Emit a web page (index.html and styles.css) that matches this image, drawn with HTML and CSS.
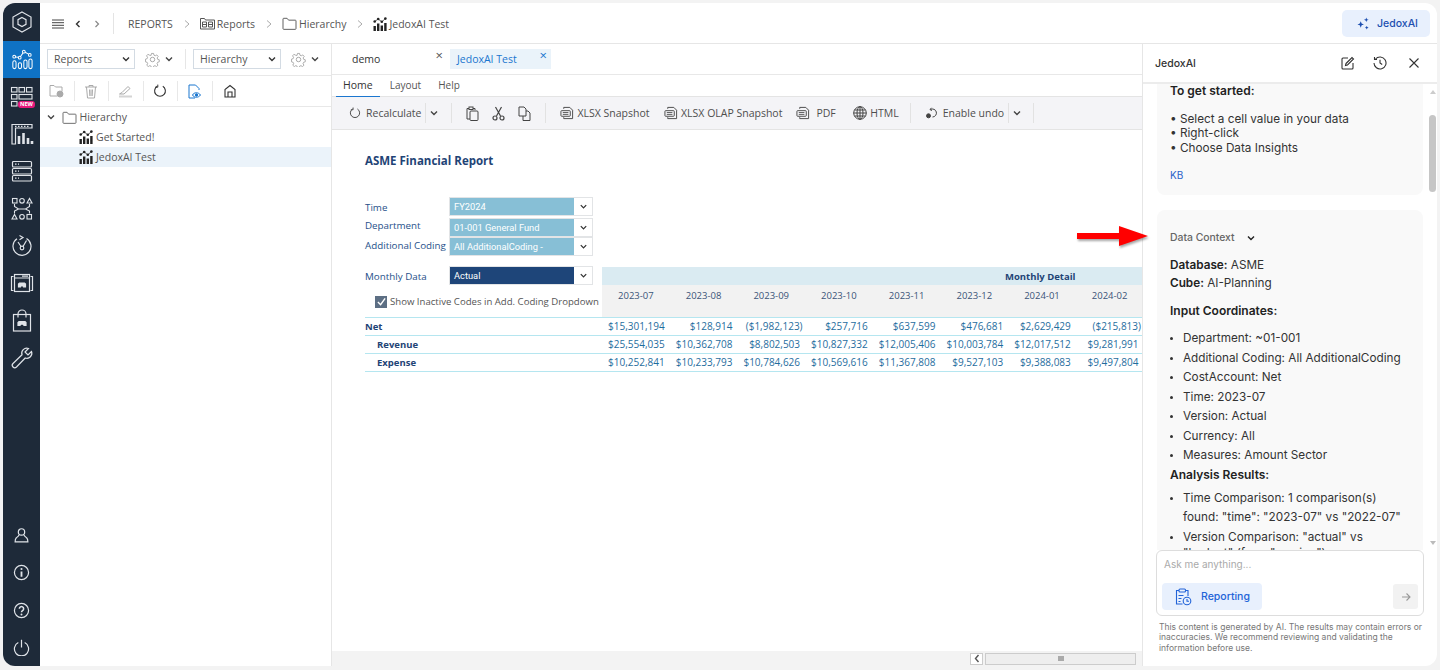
FILE: index.html
```html
<!DOCTYPE html>
<html lang="en">
<head>
    <meta charset="UTF-8">
    <title>Jedox Reports</title>
    <link rel="stylesheet" href="styles.css">
</head>
<body>
    <svg class="defs" width="0" height="0">
        <symbol id="i-report" viewBox="0 0 14 14">
            <g fill="currentColor"><rect x="0.5" y="9" width="2.4" height="5"/><rect x="4" y="6.5" width="2.4" height="7.5"/><rect x="7.6" y="8.5" width="2.4" height="5.5"/><rect x="11.2" y="6" width="2.4" height="8"/><circle cx="1.7" cy="4.5" r="1.3"/><circle cx="5.2" cy="2" r="1.3"/><circle cx="8.8" cy="4.8" r="1.3"/><circle cx="12.4" cy="1.6" r="1.3"/></g>
            <path d="M1.7 4.5 5.2 2l3.6 2.8 3.6-3.2" fill="none" stroke="currentColor" stroke-width=".7"/>
        </symbol>
        <symbol id="i-folder" viewBox="0 0 16 14">
            <path d="M1 12.5V2.2c0-.5.3-.8.8-.8h3.6l1.6 2h7.2c.5 0 .8.3.8.8v8.3c0 .5-.3.8-.8.8H1.8c-.5 0-.8-.3-.8-.8z" fill="none" stroke="currentColor" stroke-width="1"/>
        </symbol>
        <symbol id="i-chev" viewBox="0 0 10 10">
            <path d="M2 3.5 5 6.5l3-3" fill="none" stroke="currentColor" stroke-width="1.4"/>
        </symbol>
        <symbol id="i-gear" viewBox="0 0 16 16">
            <path d="M6.8 1h2.4l.4 2 1.5.7 1.8-1 1.6 1.8-1.2 1.6.5 1.6 1.9.6v2.3l-1.9.6-.6 1.5 1 1.8-1.7 1.6-1.7-1.1-1.5.6-.5 1.9H6.8l-.5-1.9-1.5-.6-1.7 1.1-1.7-1.6 1-1.8-.6-1.5-1.9-.6V7.6l1.9-.6.5-1.6L1.1 3.8l1.6-1.8 1.8 1L6.3 3.3z" transform="translate(.6 .6) scale(.93)" fill="none" stroke="currentColor" stroke-width=".9"/>
            <circle cx="8" cy="8" r="2.4" fill="none" stroke="currentColor" stroke-width=".9"/>
        </symbol>
        <symbol id="i-doc" viewBox="0 0 15 15">
            <path d="M4 3V1.500h6.500l3 3v9H4V12" fill="none" stroke="currentColor"/>
            <rect x="1" y="5" width="10" height="6" rx=".8" fill="none" stroke="currentColor"/>
            <path d="M3 7h6M3 9h6" stroke="currentColor" stroke-width=".9"/>
        </symbol>
        <symbol id="i-refresh" viewBox="0 0 14 14">
            <path d="M4.200 2.300a5.400 5.400 0 1 0 5.600 0" fill="none" stroke="currentColor" stroke-width="1.100"/>
            <path d="M4.800 .6v2.600H2.200" fill="none" stroke="currentColor" stroke-width="1"/>
        </symbol>
    </svg>

    <div class="app">
        <nav class="sidebar">
            <div class="side-item">
                <svg width="24" height="24" viewBox="0 0 24 24" fill="none" stroke="currentColor" stroke-width="1.200"><path d="M12 2 21 7v10l-9 5-9-5V7z"/><path d="M12 7.500 16 9.700v4.600l-4 2.200-4-2.200V9.700z"/></svg>
            </div>
            <div class="side-item active">
                <svg width="22" height="22" viewBox="0 0 24 24" fill="none" stroke="currentColor" stroke-width="1.100"><rect x="2" y="14" width="3.500" height="8.500" rx="1.700"/><rect x="8" y="16" width="3.500" height="6.500" rx="1.700"/><rect x="14" y="13" width="3.500" height="9.500" rx="1.700"/><rect x="19.500" y="12" width="3.500" height="10.500" rx="1.700"/><circle cx="3.500" cy="9.500" r="1.500"/><circle cx="9.500" cy="10.500" r="1.500"/><circle cx="14" cy="4" r="1.500"/><circle cx="20.500" cy="7.500" r="1.500"/><path d="M5 9.700l3 .5M10.400 9.200 13.200 5.300M15.400 4.700l3.800 2"/></svg>
            </div>
            <div class="side-item">
                <svg width="24" height="24" viewBox="0 0 24 24" fill="none" stroke="currentColor" stroke-width="1.100"><rect x="1.500" y="2.500" width="5.500" height="4.500"/><rect x="9" y="2.500" width="5.500" height="4.500"/><rect x="16.500" y="2.500" width="5.500" height="4.500"/><rect x="1.500" y="9.500" width="5.500" height="4.500"/><rect x="9" y="9.500" width="13" height="4.500"/><rect x="1.500" y="16.500" width="5.500" height="4.500"/></svg>
                <span class="new-badge">NEW</span>
            </div>
            <div class="side-item">
                <svg width="24" height="24" viewBox="0 0 24 24" fill="none" stroke="currentColor" stroke-width="1.200"><path d="M2 22V2.500h20V6H5.500v16z"/><path d="M5 4.300h15" stroke-dasharray="1.500 1.500"/><path d="M9 22v-8M13.500 22V11M18 22v-6M22 22v-3" stroke-width="2.600"/></svg>
            </div>
            <div class="side-item">
                <svg width="24" height="24" viewBox="0 0 24 24" fill="none" stroke="currentColor" stroke-width="1.200"><rect x="2.500" y="2.500" width="19" height="5.500" rx="1"/><rect x="2.500" y="9.500" width="19" height="5.500" rx="1"/><rect x="2.500" y="16.500" width="19" height="5.500" rx="1"/><path d="M5 5.200h1.500M8 5.200h1M5 12.200h1.500M8 12.200h1M5 19.200h1.500M8 19.200h1"/></svg>
            </div>
            <div class="side-item">
                <svg width="24" height="24" viewBox="0 0 24 24" fill="none" stroke="currentColor" stroke-width="1.100"><rect x="2.500" y="1.500" width="4.500" height="4.500"/><circle cx="12" cy="3.800" r="2.300"/><path d="M17 6l2.500-4.500L22 6z"/><path d="M2 22l2.500-4.500L7 22z"/><circle cx="12" cy="19.800" r="2.300"/><rect x="17" y="17.500" width="4.500" height="4.500"/><path d="M4.500 7v2.500l4 2.500h7l4-2.500V7M4.500 16.500V14l4-2M19.500 16.500V14l-4-2"/></svg>
            </div>
            <div class="side-item">
                <svg width="24" height="24" viewBox="0 0 24 24" fill="none" stroke="currentColor" stroke-width="1.200"><path d="M7 4.800A9 9 0 1 0 16.500 4.500"/><circle cx="12" cy="14" r="1.800"/><path d="M13 12.500 16.500 6.500M11 12.500 8 8M9.500 1.500 13 3.500 9.500 5.800"/></svg>
            </div>
            <div class="side-item">
                <svg width="24" height="24" viewBox="0 0 24 24" fill="none" stroke="currentColor" stroke-width="1.200"><path d="M3.500 5.500H1.500v14h2M20.500 5.500h2v14h-2"/><rect x="4.500" y="3.500" width="15" height="17"/><path d="M4.500 7h15M12 5.200h6" /><path d="M8.500 16v-3l1-1h5l1 1v3h-2l-.7-1.300h-1.600L10.500 16z" fill="currentColor"/></svg>
            </div>
            <div class="side-item">
                <svg width="24" height="24" viewBox="0 0 24 24" fill="none" stroke="currentColor" stroke-width="1.200"><rect x="3.500" y="5.500" width="17" height="16.500"/><path d="M8 8.500V5a4 4 0 0 1 8 0v3.500"/><path d="M8 16.500v-3l1-1h6l1 1v3h-2l-.7-1.300h-2.600L10 16.500z" fill="currentColor"/></svg>
            </div>
            <div class="side-item">
                <svg width="24" height="24" viewBox="0 0 24 24" fill="none" stroke="currentColor" stroke-width="1.200"><path d="M21.500 5.500 18 9l-3-3 3.500-3.500a5 5 0 0 0-6.500 6.300L3 17.500a2.500 2.500 0 0 0 0 3.500 2.500 2.500 0 0 0 3.500 0l8.700-9a5 5 0 0 0 6.300-6.500z"/></svg>
            </div>
            <div class="side-spacer"></div>
            <div class="side-item">
                <svg width="17" height="17" viewBox="0 0 24 24" fill="none" stroke="currentColor" stroke-width="1.700"><circle cx="12" cy="7" r="4.500"/><path d="M8.500 11C8 13 6 14 4.500 15.500 3 17 3 19 3 21h18c0-2 0-4-1.500-5.500C18 14 16 13 15.500 11"/></svg>
            </div>
            <div class="side-item">
                <svg width="17" height="17" viewBox="0 0 24 24" fill="none" stroke="currentColor" stroke-width="1.700"><circle cx="12" cy="12" r="10"/><path d="M12 10.500V18" stroke-width="2.600"/><circle cx="12" cy="7" r="1.500" fill="currentColor" stroke="none"/></svg>
            </div>
            <div class="side-item">
                <svg width="17" height="17" viewBox="0 0 24 24" fill="none" stroke="currentColor" stroke-width="1.700"><circle cx="12" cy="12" r="10"/><path d="M9 9.500a3 3 0 1 1 4.500 2.600c-1 .6-1.500 1.200-1.500 2.400" stroke-width="2.200"/><circle cx="12" cy="17.500" r="1.400" fill="currentColor" stroke="none"/></svg>
            </div>
            <div class="side-item">
                <svg width="17" height="17" viewBox="0 0 24 24" fill="none" stroke="currentColor" stroke-width="1.700"><path d="M7.500 5a10 10 0 1 0 9 0"/><path d="M12 1v11"/></svg>
            </div>
        </nav>

        <div class="content">
            <header class="topbar">
                <svg class="ico hamburger" width="14" height="10" viewBox="0 0 14 10" stroke="currentColor"><path d="M1 1h12M1 3.700h12M1 6.300h12M1 9h12"/></svg>
                <svg class="ico nav-back" width="8" height="10" viewBox="0 0 8 10" fill="none" stroke="#333" stroke-width="1.400"><path d="M5.500 2 2.500 5l3 3"/></svg>
                <svg class="ico nav-fwd" width="8" height="10" viewBox="0 0 8 10" fill="none" stroke="#888" stroke-width="1.200"><path d="M2.500 2l3 3-3 3"/></svg>
                <span class="top-divider"></span>
                <span class="crumb">REPORTS</span>
                <svg class="crumb-sep" width="8" height="10" viewBox="0 0 8 10" fill="none" stroke="#aaa"><path d="M2 1.500 6 5 2 8.500"/></svg>
                <svg class="crumb-ico" width="15" height="13" viewBox="0 0 15 13" fill="none" stroke="#555"><path d="M.5 12V1.500h4l1 1.500h9v9z"/><path d="M2.500 5h4v5h-4zM8.500 5h4v5h-4zM2.500 7.500h4M8.500 7.500h4"/></svg>
                <span class="crumb">Reports</span>
                <svg class="crumb-sep" width="8" height="10" viewBox="0 0 8 10" fill="none" stroke="#aaa"><path d="M2 1.500 6 5 2 8.500"/></svg>
                <svg class="crumb-ico" width="15" height="13"><use href="#i-folder"/></svg>
                <span class="crumb">Hierarchy</span>
                <svg class="crumb-sep" width="8" height="10" viewBox="0 0 8 10" fill="none" stroke="#aaa"><path d="M2 1.500 6 5 2 8.500"/></svg>
                <svg class="crumb-ico dark" width="14" height="14"><use href="#i-report"/></svg>
                <span class="crumb">JedoxAI Test</span>
                <button class="ai-button">
                    <svg width="13" height="13" viewBox="0 0 14 14" fill="currentColor"><path d="M4 4.500 5 7l2.500 1L5 9 4 11.500 3 9 .5 8 3 7zM10 .5l.7 1.800 1.800.7-1.800.7L10 5.500l-.7-1.800L7.500 3l1.800-.7zM10.500 9.500l.6 1.400 1.400.6-1.400.6-.6 1.400-.6-1.400-1.400-.6 1.400-.6z"/></svg>
                    JedoxAI
                </button>
            </header>

            <div class="workspace">
                <aside class="tree-panel">
                    <div class="pickers">
                        <div class="picker">Reports<svg width="10" height="10"><use href="#i-chev"/></svg></div>
                        <div class="gear"><svg class="gear-ico" width="15" height="15"><use href="#i-gear"/></svg><svg width="10" height="10"><use href="#i-chev"/></svg></div>
                        <span class="picker-divider"></span>
                        <div class="picker">Hierarchy<svg width="10" height="10"><use href="#i-chev"/></svg></div>
                        <div class="gear"><svg class="gear-ico" width="15" height="15"><use href="#i-gear"/></svg><svg width="10" height="10"><use href="#i-chev"/></svg></div>
                    </div>
                    <div class="tree-tools">
                        <span class="tree-tool muted"><svg width="15" height="14" viewBox="0 0 15 14" fill="none" stroke="currentColor"><path d="M8 12H1V1.500h4l1.500 1.500H13v4"/><circle cx="11" cy="10" r="3" fill="currentColor"/></svg></span>
                        <span class="tree-tool muted"><svg width="14" height="15" viewBox="0 0 14 15" fill="none" stroke="currentColor"><path d="M1 3h12M5 3V1.500h4V3M2.500 3l1 11h7l1-11M5.500 5.500l.3 6.500M8.500 5.500l-.3 6.500M7 5.500V12"/></svg></span>
                        <span class="tree-tool muted"><svg width="15" height="14" viewBox="0 0 15 14" fill="none" stroke="currentColor"><path d="M4 8.500 10 2.500l2 2-6 5.500H1.500L4 8.500"/><path d="M1 12.500h13" stroke-width="2" opacity=".5"/></svg></span>
                        <span class="tree-tool"><svg width="14" height="14"><use href="#i-refresh"/></svg></span>
                        <span class="tree-tool blue"><svg width="15" height="15" viewBox="0 0 15 15" fill="none" stroke="currentColor"><path d="M8 14H2V1h6.500L12 4.500V6"/><path d="M5.500 11c1.500-3 6-3 8 0-2 3-6.500 3-8 0z"/><circle cx="9.500" cy="11" r="1.200" fill="currentColor"/></svg></span>
                        <span class="tree-tool"><svg width="14" height="14" viewBox="0 0 14 14" fill="none" stroke="currentColor" stroke-width="1.100"><path d="M2 13V5.500L7 1.500l5 4V13z"/><path d="M5 13V8h4v5"/></svg></span>
                    </div>
                    <ul class="tree">
                        <li class="tree-row">
                            <svg class="tree-chev" width="10" height="10"><use href="#i-chev"/></svg>
                            <svg class="tree-folder" width="15" height="13"><use href="#i-folder"/></svg>
                            Hierarchy
                        </li>
                        <li class="tree-row leaf"><svg class="tree-report" width="14" height="14"><use href="#i-report"/></svg>Get Started!</li>
                        <li class="tree-row leaf selected"><svg class="tree-report" width="14" height="14"><use href="#i-report"/></svg>JedoxAI Test</li>
                    </ul>
                </aside>

                <main class="report">
                    <div class="doc-tabs">
                        <div class="doc-tab">demo<span class="tab-close">&times;</span></div>
                        <div class="doc-tab current">JedoxAI Test<span class="tab-close">&times;</span></div>
                    </div>
                    <div class="ribbon-tabs">
                        <span class="ribbon-tab on">Home</span>
                        <span class="ribbon-tab">Layout</span>
                        <span class="ribbon-tab">Help</span>
                    </div>
                    <div class="toolbar">
                        <span class="tool recalc"><svg width="12" height="12"><use href="#i-refresh"/></svg>Recalculate</span>
                        <span class="tool-split"></span>
                        <svg class="tool-chev" width="10" height="10"><use href="#i-chev"/></svg>
                        <span class="tool-split sep-a"></span>
                        <svg class="tool-ico first" width="13" height="15" viewBox="0 0 13 15" fill="none" stroke="currentColor"><path d="M3 2.500H1V13h3M9 4V2.500H7"/><rect x="3" y="1" width="4" height="2.500"/><rect x="4" y="5" width="8" height="9.500" rx="1"/></svg>
                        <svg class="tool-ico" width="13" height="15" viewBox="0 0 13 15" fill="none" stroke="currentColor" stroke-width="1.200"><path d="M3.500 1 8.500 10M9.500 1 4.500 10"/><circle cx="3" cy="12" r="2" /><circle cx="10" cy="12" r="2"/></svg>
                        <svg class="tool-ico" width="13" height="15" viewBox="0 0 13 15" fill="none" stroke="currentColor"><path d="M1 1h5l2 2v7H1z"/><path d="M8 5h2l2 2v7.500H5V10"/></svg>
                        <span class="tool-split sep-b"></span>
                        <span class="tool snap"><svg width="14" height="14"><use href="#i-doc"/></svg>XLSX Snapshot</span>
                        <span class="tool snap"><svg width="14" height="14"><use href="#i-doc"/></svg>XLSX OLAP Snapshot</span>
                        <span class="tool snap pdf"><svg width="14" height="14"><use href="#i-doc"/></svg>PDF</span>
                        <span class="tool snap html"><svg width="14" height="14" viewBox="0 0 14 14" fill="none" stroke="currentColor"><circle cx="7" cy="7" r="6.300"/><ellipse cx="7" cy="7" rx="3" ry="6.300"/><path d="M7 .7v12.600M.7 7h12.600M1.500 4h11M1.500 10h11"/></svg>HTML</span>
                        <span class="tool-split sep-c"></span>
                        <span class="tool undo"><svg width="12" height="12" viewBox="0 0 12 12" fill="none" stroke="currentColor"><path d="M4.500 2.500a4 4 0 1 1 2 7.500"/><path d="M5.500 .8 4 2.500l1.800 1.200"/><circle cx="2.500" cy="8.800" r="2" fill="currentColor"/></svg>Enable undo</span>
                        <span class="tool-split"></span>
                        <svg class="tool-chev" width="10" height="10"><use href="#i-chev"/></svg>
                        <span class="tool-split sep-d"></span>
                    </div>

                    <div class="sheet">
                        <h1 class="sheet-title">ASME Financial Report</h1>
                        <div class="sheet-grid">
                            <label class="f-label">Time</label>
                            <div class="f-select light"><span>FY2024</span><i><svg width="9" height="9"><use href="#i-chev"/></svg></i></div>
                            <label class="f-label up">Department</label>
                            <div class="f-select light mid"><span>01-001 General Fund</span><i><svg width="9" height="9"><use href="#i-chev"/></svg></i></div>
                            <label class="f-label up">Additional Coding</label>
                            <div class="f-select light"><span>All AdditionalCoding -</span><i><svg width="9" height="9"><use href="#i-chev"/></svg></i></div>

                            <label class="f-label monthly">Monthly Data</label>
                            <div class="f-select dark monthly-select"><span>Actual</span><i><svg width="9" height="9"><use href="#i-chev"/></svg></i></div>
                            <div class="band">Monthly Detail</div>

                            <label class="inactive"><span class="checkbox"><svg width="9" height="9" viewBox="0 0 10 10" fill="none" stroke="#fff" stroke-width="1.600"><path d="M1 5.500 4 8.500 9 1.500"/></svg></span>Show Inactive Codes in Add. Coding Dropdown</label>
                            <div class="dates">
                                <span>2023-07</span><span>2023-08</span><span>2023-09</span><span>2023-10</span><span>2023-11</span><span>2023-12</span><span>2024-01</span><span>2024-02</span>
                            </div>
                        </div>
                        <div class="sheet-rows">
                            <div class="row-label">Net</div>
                            <div class="val">$15,301,194</div><div class="val">$128,914</div><div class="val neg">($1,982,123)</div><div class="val">$257,716</div><div class="val">$637,599</div><div class="val">$476,681</div><div class="val">$2,629,429</div><div class="val neg">($215,813)</div>

                            <div class="row-label sub">Revenue</div>
                            <div class="val">$25,554,035</div><div class="val">$10,362,708</div><div class="val">$8,802,503</div><div class="val">$10,827,332</div><div class="val">$12,005,406</div><div class="val">$10,003,784</div><div class="val">$12,017,512</div><div class="val">$9,281,991</div>

                            <div class="row-label sub">Expense</div>
                            <div class="val">$10,252,841</div><div class="val">$10,233,793</div><div class="val">$10,784,626</div><div class="val">$10,569,616</div><div class="val">$11,367,808</div><div class="val">$9,527,103</div><div class="val">$9,388,083</div><div class="val">$9,497,804</div>
                        </div>
                    </div>

                    <div class="hscroll">
                        <span class="hscroll-btn"><svg width="8" height="9" viewBox="0 0 8 9" fill="none" stroke="#555" stroke-width="1.400"><path d="M5.500 1 2.500 4.500l3 3.500"/></svg></span>
                        <span class="hscroll-thumb"><i></i></span>
                    </div>
                </main>

                <aside class="ai-panel">
                    <div class="ai-head">
                        <span class="ai-title">JedoxAI</span>
                        <svg class="ai-edit" width="14" height="14" viewBox="0 0 14 14" fill="none" stroke="currentColor" stroke-width="1.100"><path d="M7 2H2a1 1 0 0 0-1 1v9a1 1 0 0 0 1 1h9a1 1 0 0 0 1-1V7"/><path d="M5 7.500 11 1.500l1.500 1.500-6 6L4.500 9.500z"/></svg>
                        <svg class="ai-hist" width="14" height="14" viewBox="0 0 14 14" fill="none" stroke="currentColor" stroke-width="1.100"><path d="M2.500 3A6 6 0 1 1 1 7"/><path d="M1.500 1v2.500H4M7 3.800V7l2.200 1.500"/></svg>
                        <svg class="ai-close" width="12" height="12" viewBox="0 0 12 12" fill="none" stroke="currentColor" stroke-width="1.100"><path d="M1.500 1.500l9 9M10.500 1.500l-9 9"/></svg>
                    </div>
                    <div class="ai-scroll">
                        <div class="ai-content">
                            <section class="ai-card first">
                                <p class="strong">To get started:</p>
                                <p class="tips">&bull; Select a cell value in your data<br>&bull; Right-click<br>&bull; Choose Data Insights</p>
                                <a class="kb">KB</a>
                            </section>
                            <section class="ai-card second">
                                <div class="context">Data Context<svg width="10" height="10"><use href="#i-chev"/></svg></div>
                                <p class="meta"><b>Database:</b> ASME<br><b>Cube:</b> AI-Planning</p>
                                <p class="strong sect">Input Coordinates:</p>
                                <ul class="facts">
                                    <li>Department: ~01-001</li>
                                    <li>Additional Coding: All AdditionalCoding</li>
                                    <li>CostAccount: Net</li>
                                    <li>Time: 2023-07</li>
                                    <li>Version: Actual</li>
                                    <li>Currency: All</li>
                                    <li>Measures: Amount Sector</li>
                                </ul>
                                <p class="strong results">Analysis Results:</p>
                                <ul class="facts result-list">
                                    <li>Time Comparison: 1 comparison(s) found: "time": "2023-07" vs "2022-07"</li>
                                    <li>Version Comparison: "actual" vs "budget" (from "version")</li>
                                </ul>
                            </section>
                        </div>
                        <div class="ai-track">
                            <span class="arrow-up"></span>
                            <span class="ai-thumb"></span>
                            <span class="arrow-down"></span>
                        </div>
                    </div>
                    <div class="composer">
                        <div class="placeholder">Ask me anything...</div>
                        <div class="composer-row">
                            <span class="chip">
                                <svg width="18" height="18" viewBox="0 0 18 18" fill="none" stroke="currentColor" stroke-width="1.100"><path d="M5 2.500H2.500v13.500h6M11.500 2.500H14V8"/><rect x="5" y="1" width="6.500" height="3" rx="1"/><path d="M4.500 7.500h5M4.500 10.500h3M4.500 13.500h2"/><circle cx="13" cy="13" r="3.800"/><path d="M13 11v2.200h2"/></svg>
                                Reporting
                            </span>
                            <span class="send"><svg width="10" height="10" viewBox="0 0 10 10" fill="none" stroke="currentColor" stroke-width="1.100"><path d="M1 5h8M5.500 1.500 9 5 5.500 8.500"/></svg></span>
                        </div>
                    </div>
                    <p class="disclaimer">This content is generated by AI. The results may contain errors or inaccuracies. We recommend reviewing and validating the information before use.</p>
                </aside>
            </div>
        </div>

        <svg class="pointer" width="76" height="24" viewBox="0 0 76 24"><path d="M2 8h42V1l29 10-29 10v-7H2z" fill="#f00"/></svg>
    </div>
</body>
</html>
```

FILE: styles.css
```css
/* Basic reset */
* {
    box-sizing: border-box;
    margin: 0;
    padding: 0;
}

body {
    width: 1440px;
    height: 670px;
    padding: 3px;
    overflow: hidden;
    background-color: #f3f3f3;
    font-family: 'Open Sans', sans-serif;
    font-size: 10.5px;
    color: #555;
}

.defs {
    position: absolute;
}

.app {
    position: relative;
    display: flex;
    width: 1434px;
    height: 663px;
    background-color: #fff;
    border-radius: 12px;
    overflow: hidden;
}

svg {
    flex: none;
    display: block;
}

/* Sidebar */
.sidebar {
    display: flex;
    flex-direction: column;
    flex: none;
    width: 37px;
    background-color: #1e2a39;
    color: #dfe3e8;
}

.side-item {
    position: relative;
    display: flex;
    flex: none;
    align-items: center;
    justify-content: center;
    height: 37.3px;
}

.side-item.active {
    margin-top: 0.5px;
    background-color: #0f72c4;
    color: #fff;
}

.side-spacer {
    flex: 1;
}

.new-badge {
    position: absolute;
    left: 15px;
    top: 23px;
    padding: 0 2px;
    border-radius: 3px;
    background-color: #e6197c;
    color: #fff;
    font-size: 5.5px;
    font-weight: 700;
    line-height: 7px;
}

/* Top bar */
.content {
    display: flex;
    flex: 1;
    flex-direction: column;
    min-width: 0;
}

.topbar {
    display: flex;
    flex: none;
    align-items: center;
    height: 41px;
    padding-top: 1px;
    border-bottom: 1px solid #e6e6e6;
    font-size: 10.5px;
}

.hamburger {
    margin-left: 11px;
    color: #444;
}

.nav-back {
    margin-left: 9px;
}

.nav-fwd {
    margin-left: 11px;
}

.top-divider {
    width: 1px;
    height: 21px;
    margin: 0 14px 0 12px;
    background-color: #e4e4e4;
}

.crumb {
    color: #555;
    white-space: nowrap;
}

.crumb-sep {
    margin: 0 9px 0 10px;
}

.crumb-ico {
    margin-right: 2px;
    color: #555;
}

.crumb-ico.dark {
    color: #222;
}

.ai-button {
    display: flex;
    align-items: center;
    gap: 7px;
    height: 27px;
    margin-left: auto;
    margin-right: 7px;
    padding: 0 12px 0 15px;
    border: none;
    border-radius: 5px;
    background-color: #e8f0fd;
    color: #1d4fb0;
    font-family: 'Inter', sans-serif;
    font-size: 10.5px;
    font-weight: 500;
}

.workspace {
    display: flex;
    flex: 1;
    min-height: 0;
}

/* Tree panel */
.tree-panel {
    flex: none;
    width: 292px;
    border-right: 1px solid #e6e6e6;
}

.pickers {
    display: flex;
    align-items: center;
    height: 32px;
    padding: 0 0 1px 7px;
    border-bottom: 1px solid #e8e8e8;
}

.picker {
    display: flex;
    align-items: center;
    justify-content: space-between;
    width: 89px;
    height: 20px;
    padding: 0 3px 0 6px;
    border: 1px solid #d3dbe3;
    color: #555;
}

.picker svg {
    color: #333;
}

.gear {
    display: flex;
    align-items: center;
    gap: 4px;
    width: 50px;
    padding-left: 10px;
}

.gear svg {
    color: #444;
}

.gear .gear-ico {
    color: #999;
}

.picker-divider {
    width: 1px;
    height: 20px;
    margin-right: 7px;
    background-color: #e6e6e6;
}

.tree-tools {
    display: flex;
    align-items: center;
    height: 31px;
    border-bottom: 1px solid #e8e8e8;
}

.tree-tool {
    display: flex;
    align-items: center;
    justify-content: center;
    width: 34.5px;
    height: 20px;
    border-right: 1px solid #e8e8e8;
    color: #333;
}

.tree-tool:last-child {
    border-right: none;
}

.tree-tool.muted {
    color: #aaa;
}

.tree-tool.blue {
    color: #1a76cf;
}

.tree {
    list-style: none;
}

.tree-row {
    display: flex;
    align-items: center;
    height: 20px;
    color: #555;
    white-space: nowrap;
}

.tree-chev {
    margin-left: 6px;
    color: #444;
}

.tree-folder {
    margin: 0 2.5px 0 6px;
    color: #666;
}

.tree-row.leaf {
    padding-left: 39px;
}

.tree-report {
    margin-right: 3px;
    color: #222;
}

.tree-row.selected {
    background-color: #ebf3fa;
}

/* Report */
.report {
    display: flex;
    flex: none;
    flex-direction: column;
    width: 810px;
    min-height: 0;
}

.doc-tabs {
    display: flex;
    flex: none;
    height: 31px;
    padding-top: 5px;
    border-bottom: 1px solid #e8e8e8;
}

.doc-tab {
    position: relative;
    width: 98px;
    height: 20px;
    margin-left: 20px;
    color: #333;
    font-size: 10.5px;
    line-height: 20px;
}

.doc-tab.current {
    width: 101px;
    margin-left: 0;
    padding-left: 7px;
    background-color: #eaf3fa;
    color: #1a76cf;
}

.tab-close {
    position: absolute;
    right: 7px;
    top: -4px;
    font-size: 13px;
    color: #555;
}

.doc-tab.current .tab-close {
    right: 4px;
    color: #1a76cf;
}

.ribbon-tabs {
    display: flex;
    flex: none;
    height: 22px;
    border-bottom: 1px solid #e4e4e4;
    padding-left: 4px;
}

.ribbon-tab {
    padding: 0 7px;
    margin-right: 3px;
    font-size: 10px;
    line-height: 20px;
    color: #555;
}

.ribbon-tab.on {
    height: 22px;
    border-bottom: 1.5px solid #1a76cf;
    color: #333;
    font-size: 10.5px;
    font-weight: 500;
}

.toolbar {
    display: flex;
    flex: none;
    align-items: center;
    height: 33px;
    padding-left: 17px;
    border-bottom: 1px solid #e4e4e4;
    background-color: #f4f4f7;
    color: #444;
}

.tool {
    display: flex;
    align-items: center;
    gap: 5px;
    white-space: nowrap;
    color: #4e4e4e;
}

.tool svg {
    color: #444;
}

.tool-split {
    width: 1px;
    height: 20px;
    margin: 0 3.5px;
    background-color: #e2e2e2;
}

.tool-chev {
    color: #444;
}

.sep-a {
    margin-left: 12px;
}

.tool-ico {
    margin-left: 13px;
}

.tool-ico.first {
    margin-left: 10px;
}

.sep-b {
    margin-left: 14px;
    margin-right: 14px;
}

.snap {
    margin-right: 14px;
    gap: 3.5px;
}

.pdf {
    gap: 6px;
    margin-right: 17px;
}

.html {
    margin-right: 11px;
}

.sep-c {
    margin-left: 0;
    margin-right: 15px;
}

.sep-d {
    margin-left: 11px;
}

/* Sheet */
.sheet {
    flex: 1;
    min-height: 0;
    overflow: hidden;
    padding: 23px 0 0 33px;
}

.sheet-title {
    height: 44px;
    color: #1f4476;
    font-size: 11.5px;
    font-weight: 700;
    line-height: 16px;
}

.sheet-grid {
    display: grid;
    grid-template-columns: 84px 144px 9px repeat(8, 67.7px);
    grid-template-rows: 20px 20px 19px 10px 19px 32px;
}

.sheet-rows {
    display: grid;
    grid-template-columns: 237px repeat(8, 67.7px);
    grid-auto-rows: 18px;
    border-top: 1px solid #b5e6f0;
}

.f-label {
    grid-column: 1;
    align-self: center;
    color: #26508a;
    font-size: 9.8px;
    white-space: nowrap;
}

.f-label.up {
    margin-top: -3px;
}

.f-select {
    grid-column: 2;
    display: flex;
    align-self: stretch;
    height: 19px;
    border: 1px solid #e2e4e6;
    color: #fff;
    font-family: 'Roboto', sans-serif;
    font-size: 9.3px;
    line-height: 17px;
}

.f-select.mid {
    margin-top: 1px;
}

.f-select span {
    flex: 1;
    padding-left: 4px;
}

.f-select i {
    display: flex;
    align-items: center;
    justify-content: center;
    width: 18px;
    background-color: #fff;
    color: #333;
}

.f-select.light span {
    background-color: #87bfd6;
}

.f-select.dark span {
    background-color: #1e4579;
}

.f-label.monthly {
    grid-row: 5;
    margin-top: 2px;
}

.monthly-select {
    grid-row: 5;
}

.band {
    grid-column: 4 / span 8;
    grid-row: 5;
    margin-top: 1px;
    padding-right: 68px;
    background-color: #daebf2;
    color: #1f4476;
    font-size: 9.5px;
    font-weight: 700;
    line-height: 19px;
    text-align: right;
}

.inactive {
    display: flex;
    grid-column: 1 / span 3;
    grid-row: 6;
    align-items: center;
    align-self: start;
    gap: 3px;
    height: 17px;
    margin: 8px 0 0 10px;
    color: #555;
    font-size: 9.6px;
    white-space: nowrap;
}

.checkbox {
    display: flex;
    flex: none;
    align-items: center;
    justify-content: center;
    width: 12px;
    height: 12px;
    background-color: #5d6f84;
}

.dates {
    display: grid;
    grid-column: 4 / span 8;
    grid-row: 6;
    grid-template-columns: repeat(8, 67.7px);
    padding-top: 4px;
    background-color: #f2f2f2;
    color: #3b5478;
    font-size: 9.5px;
    text-align: center;
}

.row-label {
    border-bottom: 1px solid #b5e6f0;
    color: #1f4476;
    font-size: 9.5px;
    font-weight: 700;
    line-height: 17px;
}

.row-label.sub {
    padding-left: 12px;
}

.val {
    padding-right: 5px;
    border-bottom: 1px solid #b5e6f0;
    color: #1f6d9e;
    font-size: 10px;
    line-height: 17px;
    text-align: right;
    white-space: nowrap;
}

.val.neg {
    padding-right: 2.5px;
}

.hscroll {
    display: flex;
    flex: none;
    align-items: center;
    justify-content: flex-end;
    gap: 2px;
    height: 15px;
    padding-right: 6px;
    background-color: #f3f3f3;
}

.hscroll-btn {
    display: flex;
    align-items: center;
    justify-content: center;
    width: 13px;
    height: 12px;
    border: 1px solid #ccc;
    background-color: #fff;
}

.hscroll-thumb {
    display: flex;
    align-items: center;
    justify-content: center;
    width: 151px;
    height: 12px;
    border: 1px solid #ccc;
    background-color: #eee;
}

.hscroll-thumb i {
    width: 6px;
    height: 5px;
    background-color: #aaa;
}

/* AI panel */
.ai-panel {
    display: flex;
    flex: 1;
    flex-direction: column;
    min-width: 0;
    border-left: 1px solid #e6e6e6;
    font-family: 'Inter', sans-serif;
}

.ai-head {
    display: flex;
    flex: none;
    align-items: center;
    height: 40px;
    padding-left: 12px;
    border-bottom: 2px solid #ececec;
    color: #333;
}

.ai-title {
    flex: 1;
    font-size: 10.5px;
    font-weight: 500;
}

.ai-hist {
    margin: 0 21px 0 18px;
}

.ai-close {
    margin-right: 17px;
}

.ai-scroll {
    display: flex;
    flex: none;
    height: 466px;
    overflow: hidden;
}

.ai-content {
    flex: 1;
    min-width: 0;
    padding: 0 2px 0 14px;
}

.ai-card {
    border-radius: 8px;
    background-color: #f9f9f9;
    padding: 0 13px;
    font-size: 11.75px;
    color: #333;
}

.ai-card.first {
    height: 111px;
    border-top-left-radius: 0;
    border-top-right-radius: 0;
}

.ai-card.second {
    margin-top: 15px;
    padding-top: 21px;
    padding-bottom: 30px;
}

.strong {
    color: #222;
    font-size: 12px;
    font-weight: 600;
    line-height: 14px;
}

.tips {
    margin-top: 14px;
    line-height: 14.4px;
}

.kb {
    display: block;
    margin-top: 14px;
    color: #2b62c9;
    font-size: 10px;
}

.context {
    display: flex;
    align-items: center;
    gap: 11px;
    color: #666;
    font-size: 10.4px;
    font-weight: 500;
}

.context svg {
    color: #222;
}

.meta {
    margin-top: 12px;
    line-height: 18px;
}

.meta b {
    color: #222;
    font-weight: 600;
}

.sect {
    margin-top: 12px;
}

.facts {
    margin-top: 11px;
    padding-left: 13px;
    line-height: 19.5px;
}

.facts li::marker {
    font-size: 9px;
}

.results {
    margin-top: 2px;
}

.result-list {
    margin-top: 7px;
    padding-right: 5px;
}

.result-list li:last-child {
    line-height: 16px;
    padding-top: 1px;
}

.ai-track {
    display: flex;
    flex: none;
    flex-direction: column;
    align-items: center;
    width: 12px;
    padding-left: 3px;
}

.arrow-up {
    margin-top: 6px;
    border: 3px solid transparent;
    border-top: none;
    border-bottom: 4px solid #ccc;
}

.ai-thumb {
    width: 7px;
    height: 77px;
    margin-top: 21px;
    border-radius: 4px;
    background-color: #c6c6c6;
}

.arrow-down {
    margin-top: auto;
    margin-bottom: 5px;
    border: 3px solid transparent;
    border-bottom: none;
    border-top: 4px solid #bbb;
}

.composer {
    flex: none;
    width: 268px;
    height: 66px;
    margin-left: 13px;
    padding: 7px 5px 0;
    border: 1px solid #ddd;
    border-radius: 6px;
    background-color: #fff;
}

.placeholder {
    padding-left: 2px;
    color: #aaa;
    font-size: 10px;
    line-height: 13px;
}

.composer-row {
    display: flex;
    align-items: center;
    justify-content: space-between;
    margin-top: 12px;
}

.chip {
    display: flex;
    align-items: center;
    gap: 9px;
    width: 100px;
    height: 27px;
    padding-left: 12px;
    border-radius: 4px;
    background-color: #e8f0fd;
    color: #2263d8;
    font-size: 10.5px;
    font-weight: 500;
}

.send {
    display: flex;
    align-items: center;
    justify-content: center;
    width: 25px;
    height: 25px;
    border-radius: 3px;
    background-color: #f2f2f2;
    color: #999;
}

.disclaimer {
    width: 268px;
    margin: 6px 0 0 16px;
    color: #777;
    font-size: 8.5px;
    line-height: 10.4px;
}

/* Red arrow annotation drawn on top of the screenshot */
.pointer {
    position: absolute;
    left: 1072px;
    top: 222px;
    filter: drop-shadow(1px 2px 1px rgba(0, 0, 0, 0.35));
}
```
